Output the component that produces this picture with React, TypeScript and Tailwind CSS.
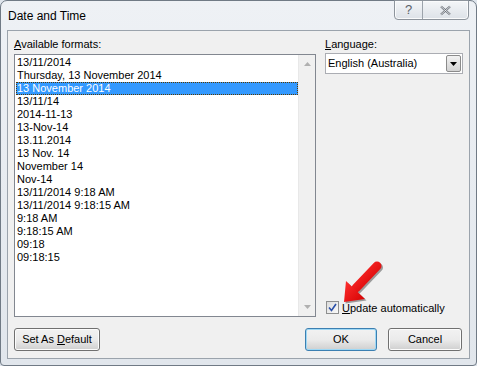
import React from 'react';

const formats = [
  '13/11/2014',
  'Thursday, 13 November 2014',
  '13 November 2014',
  '13/11/14',
  '2014-11-13',
  '13-Nov-14',
  '13.11.2014',
  '13 Nov. 14',
  'November 14',
  'Nov-14',
  '13/11/2014 9:18 AM',
  '13/11/2014 9:18:15 AM',
  '9:18 AM',
  '9:18:15 AM',
  '09:18',
  '09:18:15',
];

const font = { fontFamily: '"Liberation Sans", Arial, sans-serif' };

function WinButton({ children, primary = false, className = '' }: { children: React.ReactNode; primary?: boolean; className?: string }) {
  return (
    <button
      className={`h-[23px] rounded-[3px] border text-[11px] text-black bg-gradient-to-b from-[#f2f2f2] via-[#ebebeb] to-[#cfcfcf] ${
        primary ? 'border-[#3c7fb1] shadow-[inset_0_0_0_1px_#9ed8f5]' : 'border-[#707070] shadow-[inset_0_0_0_1px_#fcfcfc]'
      } ${className}`}
    >
      {children}
    </button>
  );
}

export default function App() {
  return (
    <div className="w-[477px] h-[366px] bg-[#dfe5ec]" style={font}>
      <div className="relative w-full h-full rounded-t-[7px] rounded-b-[4px] border border-[#707a85] bg-gradient-to-b from-[#eef1f5] to-[#e1e6ec] flex flex-col">
        {/* Title bar */}
        <div className="h-[29px] flex items-start justify-between">
          <span className="pl-[7px] pt-[6px] text-[12px] text-black">Date and Time</span>
          <div className="mr-[7px] -mt-px flex h-[20px] rounded-b-[4px] border border-[#8d949c] bg-gradient-to-b from-[#f4f6f8] to-[#dde2e8] shadow-[inset_0_0_0_1px_#fafbfc]">
            <div className="w-[28px] flex items-center justify-center border-r border-[#9ca3ab] text-[13px] text-[#5b6168]">?</div>
            <div className="w-[45px] flex items-center justify-center">
              <svg width="13" height="11" viewBox="0 0 13 11">
                <path d="M2 1.5 L11 9.5 M11 1.5 L2 9.5" stroke="#6a7078" strokeWidth="2.2" fill="none" />
                <path d="M2 1.5 L11 9.5 M11 1.5 L2 9.5" stroke="#f4f5f6" strokeWidth="0.8" fill="none" />
              </svg>
            </div>
          </div>
        </div>

        {/* Client area */}
        <div className="flex-1 mx-[6px] mb-[6px] border border-[#9ba3ac] bg-[#f0f0f0] flex flex-col pl-[6px] pr-[6px] pt-[6px] pb-[7px]">
          <div className="flex flex-1 gap-[9px]">
            {/* Left column */}
            <div className="w-[302px] flex flex-col">
              <div className="h-[17px] text-[11px] leading-[14px] text-black">
                <span className="underline">A</span>vailable formats:
              </div>
              <div className="h-[263px] border border-[#828790] bg-white flex">
                <div className="flex-1 pt-px pl-px">
                  {formats.map((f, i) =>
                    i === 2 ? (
                      <div
                        key={f}
                        className="h-[13px] leading-[12px] text-[11px] text-white bg-[#3399ff] outline-1 outline-dotted outline-[#5a3b00] -outline-offset-1 pl-[1px]"
                      >
                        {f}
                      </div>
                    ) : (
                      <div key={f} className="h-[13px] leading-[13px] text-[11px] text-black pl-[1px]">
                        {f}
                      </div>
                    )
                  )}
                </div>
                <div className="w-[17px] bg-[#f0f0f0] border-l border-[#e8e8e8] flex flex-col items-center justify-between py-[7px]">
                  <svg width="7" height="4" viewBox="0 0 7 4">
                    <path d="M0 4 L3.5 0 L7 4 Z" fill="#b0b0b0" />
                  </svg>
                  <svg width="7" height="4" viewBox="0 0 7 4">
                    <path d="M0 0 L3.5 4 L7 0 Z" fill="#b0b0b0" />
                  </svg>
                </div>
              </div>
            </div>

            {/* Right column */}
            <div className="flex-1 flex flex-col">
              <div className="h-[16px] text-[11px] leading-[14px] text-black">
                <span className="underline">L</span>anguage:
              </div>
              <div className="h-[21px] border border-[#abadb3] bg-white flex items-center">
                <span className="flex-1 pl-[2px] text-[11px] text-black">English (Australia)</span>
                <div className="w-[15px] h-[17px] mr-px border border-[#8b8b8b] rounded-[2px] bg-gradient-to-b from-[#f2f2f2] to-[#d2d2d2] flex items-center justify-center">
                  <svg width="7" height="4" viewBox="0 0 7 4">
                    <path d="M0 0 L3.5 4 L7 0 Z" fill="#000" />
                  </svg>
                </div>
              </div>
              <div className="flex-1" />
              <div className="flex items-center gap-[3px] pl-px mb-[2px]">
                <div className="w-[13px] h-[13px] border border-[#8e8f8f] bg-gradient-to-br from-[#dcdcdc] to-[#fafafa] flex items-center justify-center">
                  <svg width="9" height="9" viewBox="0 0 9 9">
                    <path d="M1 4.5 L3.5 7.5 L8 1" stroke="#2a4fa8" strokeWidth="1.6" fill="none" />
                  </svg>
                </div>
                <span className="text-[11px] text-black">
                  <span className="underline">U</span>pdate automatically
                </span>
              </div>
            </div>
          </div>

          {/* Buttons */}
          <div className="flex items-end mt-[10px]">
            <WinButton className="w-[86px]">
              Set As <span className="underline">D</span>efault
            </WinButton>
            <div className="flex-1" />
            <WinButton primary className="w-[72px]">OK</WinButton>
            <WinButton className="w-[74px] ml-[11px] mr-px">Cancel</WinButton>
          </div>
        </div>

        {/* Red annotation arrow */}
        <svg className="absolute left-[333px] top-[254px] pointer-events-none" width="54" height="54" viewBox="0 0 54 54">
          <defs>
            <linearGradient id="rg" x1="0" y1="0" x2="1" y2="1">
              <stop offset="0" stopColor="#ff3030" />
              <stop offset="1" stopColor="#d40000" />
            </linearGradient>
          </defs>
          <g transform="translate(1.5,1.5)" opacity="0.35">
            <path d="M22 33 L43 11" stroke="#000" strokeWidth="9" strokeLinecap="round" />
            <path d="M10 47 L12 26 L31 44 Z" fill="#000" />
          </g>
          <path d="M22 33 L43 11" stroke="url(#rg)" strokeWidth="9" strokeLinecap="round" />
          <path d="M10 47 L12 26 L31 44 Z" fill="url(#rg)" />
        </svg>
      </div>
    </div>
  );
}
